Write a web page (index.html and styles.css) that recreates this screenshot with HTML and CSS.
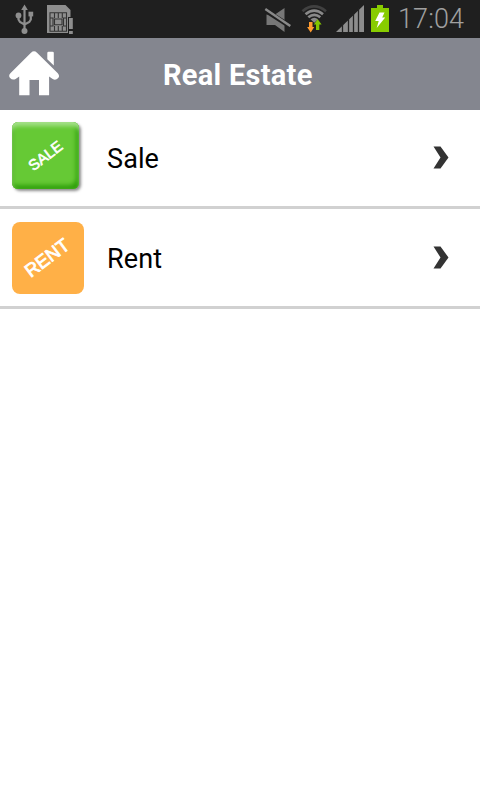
FILE: index.html
```
<!DOCTYPE html>
<html lang="en">
<head>
<meta charset="utf-8">
<title>Real Estate</title>
<link rel="stylesheet" href="styles.css">
</head>
<body>
<div class="status">
  <svg class="status-left" width="80" height="38" viewBox="0 0 80 38">
    <g fill="#8e8e8e">
      <path d="M24.5 4.5l3.3 5.5h-6.6z"/>
      <circle cx="18.5" cy="15.5" r="2.9"/>
      <rect x="28.5" y="11.7" width="4.7" height="4.7"/>
      <circle cx="24.5" cy="31" r="3"/>
    </g>
    <path d="M24.5 8v22M18.5 16v3.5l1.5 2.5 4.5 2.5M30.8 16v3.5l-1.5 2.5-4.8 2.5" fill="none" stroke="#8e8e8e" stroke-width="2.2"/>
    <path d="M47 5h18.5l5 5v7H68v16H47z" fill="#8e8e8e"/>
    <path d="M50 12.7h16.5v18.6H50zM54.5 13v5M58.3 13v5M62.3 13v5M54.5 26v5M58.3 26v5M62.3 26v5M50 18h3v8h-3M66.5 18h-3v8h3M54.5 19h7.5v5.7h-7.5z" fill="none" stroke="#333" stroke-width="1.1"/>
    <path d="M69 18h3.8v11H69zM69 31h3.8v3H69z" fill="#8e8e8e"/>
  </svg>
  <svg class="status-right" width="135" height="38" viewBox="255 0 135 38">
    <path d="M266.5 14.5h8.5l9.5-6.5v24l-9.5-7h-8.5z" fill="#777"/>
    <path d="M265.5 10.5l25 16" stroke="#1e1e1e" stroke-width="5"/>
    <path d="M265.3 9l25 17" stroke="#898989" stroke-width="2.5"/>
    <g fill="none" stroke-width="2.7">
      <path d="M302.5 11.2q11.5-9.5 23.5 0" stroke="#414141"/>
      <path d="M305.5 14.2q8.7-7 17.5 0" stroke="#898989"/>
      <path d="M308.3 17.3q6-4.8 12 0" stroke="#898989"/>
    </g>
    <path d="M310.5 19.2q3.8-3 7.6 0l-3.8 3.5z" fill="#898989"/>
    <path d="M309 22h3.5v5h1.800l-3.600 5.500-3.600-5.500H309z" fill="#ff9b2f"/>
    <path d="M316 30v-5.500h-2.200l3.900-5.200 3.900 5.200h-2.300V30z" fill="#82c500"/>
    <path d="M336 32l28-27v27z" fill="#8d8d8d"/>
    <path d="M342.5 24v8M348.5 18v14M353.5 14v18M358.5 8v24" stroke="#232323" stroke-width="1.3"/>
    <path d="M377 5h6v3h6v24h-18V8h6z" fill="#8c0"/>
    <path d="M379.5 12.5h5l-2.300 5h3l-8.500 10.500 2-7h-3.500z" fill="#fff"/>
  </svg>
  <span class="clock">17:04</span>
</div>
<header class="header">
  <svg class="home" width="52" height="46" viewBox="9 51 52 46">
    <path d="M34 51.3q1.5 0 3 1.4l20.8 20.5q2.300 2.600.4 4.900-2.400 2.500-5.500 1l-3.600-2.500v18.700H39V80h-9.500v15.300H19.200V76.600l-3.600 2.500q-3.200 1.400-5.500-1-2-2.500.3-4.900L31 52.700q1.500-1.400 3-1.400z" fill="#fff"/>
    <path d="M47.3 53q0-1.200 1.200-1.200h4q1.300 0 1.300 1.200v12.500l-6.500-6.300z" fill="#fff"/>
  </svg>
  <h1 class="title">Real Estate</h1>
</header>
<main>
  <div class="row">
    <div class="tile sale"><span class="tag">SALE</span></div>
    <span class="label">Sale</span>
    <svg class="arrow" width="16" height="24" viewBox="0 0 16 24"><path d="M.5.5h7l8 11-8 11h-7l7-11z" fill="#333"/></svg>
  </div>
  <div class="row">
    <div class="tile rent"><span class="tag">RENT</span></div>
    <span class="label">Rent</span>
    <svg class="arrow" width="16" height="24" viewBox="0 0 16 24"><path d="M.5.5h7l8 11-8 11h-7l7-11z" fill="#333"/></svg>
  </div>
</main>
</body>
</html>
```

FILE: styles.css
```
* { box-sizing: border-box; }
body {
  margin: 0;
  background: #fff;
  color: #000;
  font-family: Roboto, sans-serif;
}
svg { display: block; flex: none; }
.status {
  display: flex;
  height: 38px;
  background: #1f1f1f;
}
.status-right { margin-left: 175px; }
.clock {
  margin-left: 8px;
  font-size: 27px;
  line-height: 38px;
  font-weight: 300;
  letter-spacing: .1px;
  color: #a0a0a0;
  white-space: nowrap;
}
.header {
  display: flex;
  align-items: center;
  height: 72px;
  padding-left: 9px;
  background: #84868f;
}
.title {
  margin: 2px 0 0 102px;
  font-size: 29px;
  line-height: 40px;
  font-weight: 700;
  letter-spacing: .27px;
  color: #fff;
  white-space: nowrap;
}
.row {
  display: flex;
  align-items: center;
  height: 100px;
  padding: 0 31px 0 12px;
  border-bottom: 3px solid #d1d1d1;
}
.row:first-child { height: 99px; }
.tile {
  display: flex;
  align-items: center;
  justify-content: center;
  flex: none;
  color: #fff;
  font-family: "Liberation Sans", sans-serif;
}
.sale {
  width: 67px;
  height: 67px;
  margin: 0 5px 5px 0;
  border-radius: 6px;
  background: #66c935;
  box-shadow: 2px 2px 3px rgba(0, 0, 0, .45),
    inset 0 5px 4px -1px #a5e18a,
    inset 2px 0 3px #55b42b,
    inset -4px -5px 4px -1px #30a00c;
}
.rent {
  width: 72px;
  height: 72px;
  border-radius: 8px;
  background: #ffb047;
}
.tag { transform: rotate(-37deg); }
.sale .tag {
  margin-right: 1px;
  font-size: 15px;
  -webkit-text-stroke: .6px #fff;
}
.rent .tag {
  margin-right: 2px;
  font-size: 18.5px;
  -webkit-text-stroke: .8px #fff;
}
.label {
  flex: 1;
  margin-left: 23px;
  padding-top: 2px;
  font-size: 27px;
  line-height: 36px;
  letter-spacing: .1px;
}
```
